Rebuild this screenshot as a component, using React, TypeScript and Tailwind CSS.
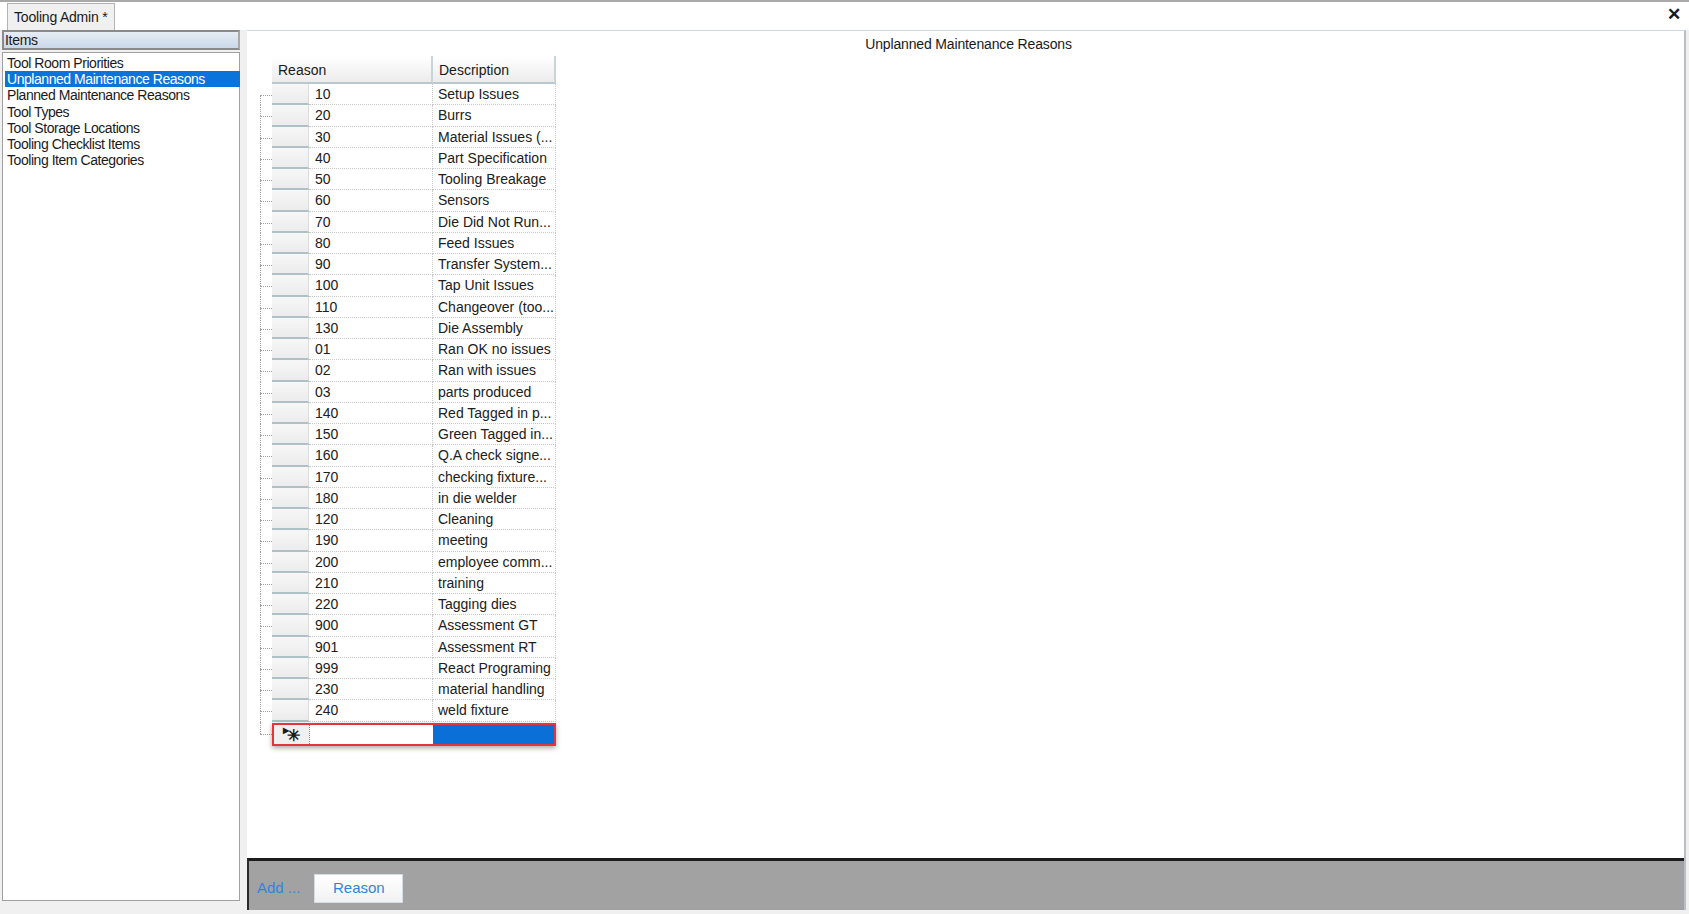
import React from "react";

const rows: [string, string][] = [
  ["10", "Setup Issues"],
  ["20", "Burrs"],
  ["30", "Material Issues (..."],
  ["40", "Part Specification"],
  ["50", "Tooling Breakage"],
  ["60", "Sensors"],
  ["70", "Die Did Not Run..."],
  ["80", "Feed Issues"],
  ["90", "Transfer System..."],
  ["100", "Tap Unit Issues"],
  ["110", "Changeover  (too..."],
  ["130", "Die Assembly"],
  ["01", "Ran OK no issues"],
  ["02", "Ran with issues"],
  ["03", "parts produced"],
  ["140", "Red Tagged in p..."],
  ["150", "Green Tagged in..."],
  ["160", "Q.A check signe..."],
  ["170", "checking fixture..."],
  ["180", "in die welder"],
  ["120", "Cleaning"],
  ["190", "meeting"],
  ["200", "employee  comm..."],
  ["210", "training"],
  ["220", "Tagging dies"],
  ["900", "Assessment GT"],
  ["901", "Assessment RT"],
  ["999", "React Programing"],
  ["230", "material handling"],
  ["240", "weld fixture"],
];

const items = [
  "Tool Room Priorities",
  "Unplanned Maintenance Reasons",
  "Planned Maintenance Reasons",
  "Tool Types",
  "Tool Storage Locations",
  "Tooling Checklist Items",
  "Tooling Item Categories",
];

export default function App() {
  return (
    <div
      className="w-[1689px] h-[914px] bg-[#f0f0f0] flex flex-col overflow-hidden text-[#1a1a1a]"
      style={{ fontFamily: '"Liberation Sans", Arial, sans-serif' }}
    >
      {/* Tab strip */}
      <div className="h-[30px] shrink-0 border-t-2 border-[#a9a9a9] bg-white flex items-end pl-[7px] relative">
        <div className="h-[27px] px-[6px] bg-[#f0f0f0] border border-b-0 border-[#b4b4b4] flex items-center text-[14px] leading-none tracking-[-0.2px]">
          Tooling Admin *
        </div>
        <div className="absolute right-[8px] top-[4px] text-[17px] font-bold leading-none">✕</div>
      </div>

      <div className="flex flex-1 min-h-0">
        {/* Left panel */}
        <div className="w-[240px] shrink-0 pl-[2px] flex flex-col pb-[13px]">
          <div className="h-[20px] border-2 border-[#8a8a8a] border-r-[#a9a9a9] bg-gradient-to-b from-[#e6edf5] to-[#cad8e8] flex items-center pl-[1px] text-[14px] leading-none tracking-[-0.3px]">
            Items
          </div>
          <div className="mt-[2px] flex-1 bg-white border border-[#a0a0a0] pt-[2px] px-[2px]">
            {items.map((it, i) => (
              <div
                key={it}
                className={
                  "h-[16.2px] flex items-center pl-[2px] text-[14px] leading-none tracking-[-0.45px] " +
                  (i === 1 ? "bg-[#0a74da] text-white w-[235px]" : "")
                }
              >
                {it}
              </div>
            ))}
          </div>
        </div>

        {/* Right panel */}
        <div className="ml-[7px] w-[1439px] flex flex-col bg-white border-t border-[#cfd9e3] border-r-2 border-r-[#b8bfc6] mb-[4px]">
          <div className="flex-1 min-h-0">
            <div className="h-[25px] flex items-center justify-center text-[14px] pt-[1px] tracking-[-0.15px] pl-[6px]">
              Unplanned Maintenance Reasons
            </div>
            {/* Grid */}
            <div className="ml-[13px] flex">
              {/* tree lines column */}
              <div className="w-[12px] flex flex-col pt-[28px]">
                {rows.map((r, i) => (
                  <div key={i} className="h-[21.25px] flex flex-col">
                    <div
                      className={
                        "h-[11px] " + (i === 0 ? "" : "border-l border-dotted border-[#a0a0a0]")
                      }
                    />
                    <div className="flex-1 border-l border-t border-dotted border-[#a0a0a0]" />
                  </div>
                ))}
                <div className="h-[12px] border-l border-dotted border-[#a0a0a0]" />
                <div className="h-[1px] border-t border-dotted border-[#a0a0a0]" />
              </div>
              <div className="w-[284px] flex flex-col">
                {/* Header */}
                <div className="h-[28px] flex text-[14px] leading-none">
                  <div className="w-[161px] bg-gradient-to-b from-white to-[#ececec] border-r-2 border-[#c9d4d6] border-b-2 border-b-[#b7c9cc] flex items-center pl-[6px] pt-[2px]">
                    Reason
                  </div>
                  <div className="w-[123px] bg-gradient-to-b from-white to-[#ececec] border-r-2 border-[#c9d4d6] border-b-2 border-b-[#b7c9cc] flex items-center pl-[6px] pt-[2px]">
                    Description
                  </div>
                </div>
                {rows.map(([r, d], i) => (
                  <div key={i} className="h-[21.25px] flex text-[14px] leading-none">
                    <div className="w-[37px] bg-gradient-to-b from-[#f7f7f7] to-[#ececec] border-b-2 border-b-[#aec1c4] border-r border-r-[#dcdcdc]" />
                    <div className="w-[124px] border-r border-dotted border-[#c8c8c8] border-b flex items-center pl-[6px] text-[#202020]">
                      {r}
                    </div>
                    <div className="w-[123px] border-r border-dotted border-[#c8c8c8] border-b flex items-center pl-[5px] whitespace-nowrap overflow-hidden text-[#202020]">
                      {d}
                    </div>
                  </div>
                ))}
                {/* new row */}
                <div className="mt-[1px] h-[23px] flex border-2 border-[#e5343d] shadow-[0_2px_5px_rgba(0,0,0,0.35)]">
                  <div className="w-[35px] bg-[#f0f0f0] flex items-center justify-center text-[16px] leading-none font-bold relative">
                    <span className="absolute left-[9px] top-[2px] text-[8px]">▶</span>
                    <span className="ml-[3px] mt-[3px]">✳</span>
                  </div>
                  <div className="w-[124px] bg-white border-l border-dotted border-[#5a8ad0]" />
                  <div className="flex-1 bg-[#0a6fd6]" />
                </div>
              </div>
            </div>
          </div>
          {/* Bottom bar */}
          <div className="h-[52px] shrink-0 bg-[#a2a2a2] border-t-[3px] border-t-[#1c1c1c] border-l-2 border-l-[#2a2a2a] flex items-center pl-[8px] pt-[5px]">
            <span className="text-[15px] text-[#2b86e0]">Add ...</span>
            <div className="ml-[14px] w-[89px] h-[29px] bg-gradient-to-b from-white to-[#f2f2f2] border border-[#d4dde0] flex items-center justify-center text-[15px] text-[#2b86e0]">
              Reason
            </div>
          </div>
        </div>
      </div>
    </div>
  );
}
